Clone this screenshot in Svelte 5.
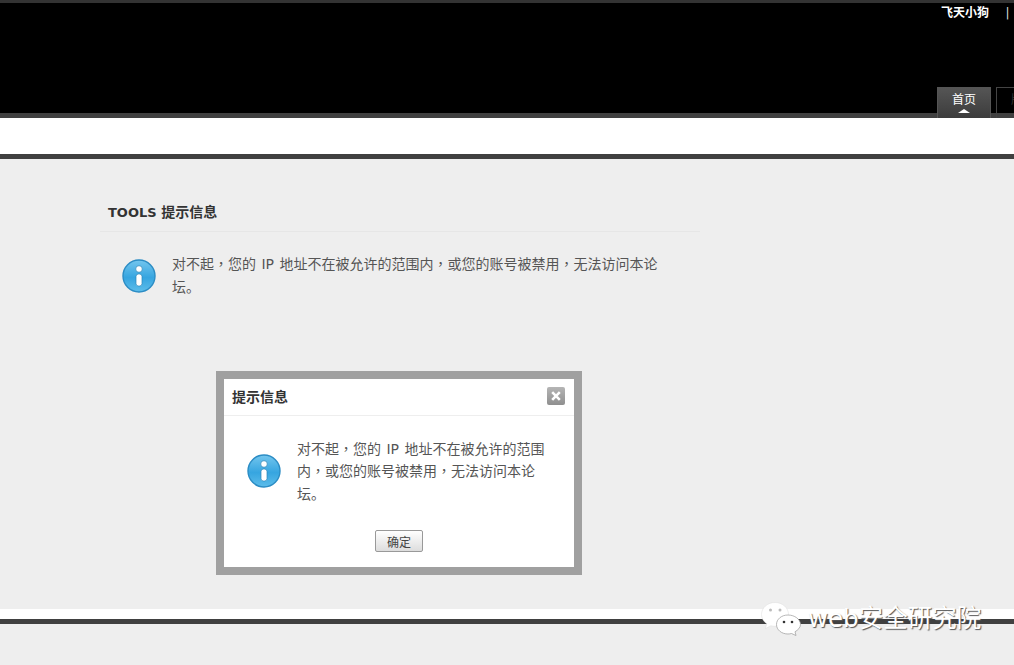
<script>
	const message = "对不起，您的 IP 地址不在被允许的范围内，或您的账号被禁用，无法访问本论坛"
</script>

{#snippet infoIcon()}
	<svg class="info-icon" viewBox="0 0 34 34">
		<defs>
			<linearGradient id="info-fill" x1="0" y1="0" x2="0" y2="1">
				<stop offset="0" stop-color="#74c6ee" />
				<stop offset="0.55" stop-color="#36a5e0" />
				<stop offset="1" stop-color="#5dbdea" />
			</linearGradient>
		</defs>
		<circle cx="17" cy="17" r="16" fill="url(#info-fill)" stroke="#2b8cc4" stroke-width="1.4" />
		<circle cx="17" cy="10" r="3.3" fill="#fff" stroke="#2a84b8" stroke-width="0.7" />
		<rect x="14" y="15" width="6" height="12" rx="2.6" fill="#fff" stroke="#2a84b8" stroke-width="0.7" />
	</svg>
{/snippet}

<div class="page">
	<header class="top">
		<div class="user">
			<span class="name">飞天小狗</span>
			<span class="sep">|</span>
		</div>
		<nav class="tabs">
			<a class="tab active" href="#home">首页</a>
			<a class="tab" href="#forum">版块</a>
		</nav>
	</header>
	<div class="white-band"></div>

	<main class="content">
		<section class="notice">
			<h1>TOOLS <span>提示信息</span></h1>
			<div class="notice-body">
				{@render infoIcon()}
				<p>{message}<span class="stop">。</span></p>
			</div>
		</section>
	</main>

	<footer class="bottom">
		<div class="foot-white"></div>
		<div class="foot-rest"></div>
	</footer>

	<div class="dialog">
		<div class="dialog-head">
			<strong>提示信息</strong>
			<button class="close" aria-label="关闭">
				<svg viewBox="0 0 18 18">
					<path d="M5.2 5.2l7.6 7.6M12.8 5.2l-7.6 7.6" stroke="#fff" stroke-width="2.6" fill="none" />
				</svg>
			</button>
		</div>
		<div class="dialog-body">
			{@render infoIcon()}
			<p>{message}<span class="stop">。</span></p>
		</div>
		<div class="dialog-foot">
			<button class="ok">确定</button>
		</div>
	</div>

	<div class="watermark">
		<svg class="wechat" viewBox="0 0 40 34">
			<path d="M14 .5C6.500.5.500 5.800.500 12.500c0 3.800 2.100 7 5.200 9.200L4.500 26.500l5.400-2.800c1.500.4 2.600.6 4.100.6 7.500 0 13.500-5.500 13.500-11.800C27.500 5.800 21.500.5 14 .5z" fill="#fff" stroke="#ddd" stroke-width="0.5" />
			<circle cx="9.500" cy="8" r="1.500" fill="#bbb" />
			<circle cx="19" cy="8" r="1.500" fill="#bbb" />
			<path d="M27 13c-6.500 0-11.500 4.200-11.500 9.500S20.500 32 27 32c1.200 0 2.400-.2 3.500-.5l4.500 2-1-3.700c3-1.800 5.500-4.300 5.500-7.300C39.500 17.200 33.500 13 27 13z" fill="#fff" stroke="#999" stroke-width="0.7" />
			<circle cx="23" cy="20" r="1.300" fill="#333" />
			<circle cx="31" cy="20" r="1.300" fill="#333" />
		</svg>
		<span>web安全研究院</span>
	</div>
</div>

<style>
	:global(body) {
		margin: 0;
		overflow: hidden;
	}

	.page {
		position: relative;
		width: 1014px;
		height: 665px;
		overflow: hidden;
		background: #eee;
		font-family: "DejaVu Sans", "Noto Sans CJK SC", sans-serif;
		color: #444;
	}

	.top {
		box-sizing: border-box;
		height: 118px;
		background: #000;
		border-top: 3px solid #333;
		border-bottom: 5px solid #404040;
		display: flex;
		flex-direction: column;
		justify-content: space-between;
	}

	.user {
		display: flex;
		gap: 16px;
		padding: 2px 0 0 941px;
		color: #fff;
		font-size: 12px;
		line-height: 16px;
		white-space: nowrap;
	}

	.name {
		font-weight: bold;
	}

	.sep {
		color: #ddd;
		margin-left: 0.4px;
	}

	.tabs {
		display: flex;
		gap: 5px;
		padding-left: 937px;
		margin-bottom: -5px;
	}

	.tab {
		flex: none;
		position: relative;
		box-sizing: border-box;
		width: 54px;
		height: 31px;
		padding-top: 4px;
		border: 1px solid #444;
		border-bottom: 0;
		font-size: 12px;
		line-height: 17px;
		text-align: center;
		text-decoration: none;
		color: #333;
	}

	.tab.active {
		background: linear-gradient(#555, #3c3c3c);
		border-color: #555;
		color: #fff;
	}

	.tab.active::after {
		content: "";
		position: absolute;
		left: 20px;
		bottom: 5px;
		border: 6px solid transparent;
		border-top: 0;
		border-bottom: 4px solid #fff;
	}

	.white-band {
		height: 36px;
		background: #fff;
		border-bottom: 5px solid #404040;
	}

	.content {
		height: 450px;
		box-sizing: border-box;
		padding: 44px 0 0 100px;
	}

	.notice {
		width: 600px;
	}

	h1 {
		box-sizing: border-box;
		height: 29px;
		margin: 0;
		padding: 0 8px;
		border-bottom: 1px solid #e6e6e6;
		font-size: 13px;
		line-height: 18px;
		font-weight: bold;
		color: #333;
	}

	h1 span {
		font-size: 14px;
	}

	.notice-body {
		display: flex;
		align-items: center;
		gap: 16px;
		padding: 21px 40px 0 22px;
	}

	p {
		margin: 0;
		font-family: "DejaVu Sans", "Noto Sans CJK TC", sans-serif;
		font-size: 14px;
		line-height: 22px;
		word-spacing: 1px;
		color: #555;
	}

	.stop {
		font-family: "Noto Sans CJK SC", sans-serif;
	}

	.info-icon {
		flex: none;
		width: 34px;
		height: 34px;
	}

	.bottom {
		height: 56px;
	}

	.foot-white {
		height: 10px;
		background: #fff;
		border-bottom: 5px solid #404040;
	}

	.dialog {
		position: absolute;
		left: 216px;
		top: 371px;
		box-sizing: border-box;
		width: 366px;
		height: 204px;
		border: 8px solid #a0a0a0;
		background: #fff;
		display: flex;
		flex-direction: column;
	}

	.dialog-head {
		box-sizing: border-box;
		height: 37px;
		flex: none;
		display: flex;
		align-items: center;
		justify-content: space-between;
		padding: 0 9px 2px 8px;
		border-bottom: 1px solid #eee;
		font-size: 14px;
		color: #333;
	}

	.close {
		width: 18px;
		height: 18px;
		padding: 0;
		border: 0;
		border-radius: 2px;
		background: linear-gradient(#b5b5b5, #8f8f8f);
	}

	.close svg {
		display: block;
		width: 18px;
		height: 18px;
	}

	.dialog-body {
		flex: 1;
		display: flex;
		align-items: center;
		gap: 16px;
		padding: 0 26px 4px 23px;
	}

	.dialog-foot {
		flex: none;
		height: 37px;
		text-align: center;
	}

	.ok {
		width: 48px;
		height: 22px;
		padding: 0;
		border: 1px solid #999;
		border-radius: 2px;
		background: linear-gradient(#fff, #ddd);
		font-family: inherit;
		font-size: 12px;
		color: #444;
	}

	.watermark {
		position: absolute;
		left: 761px;
		top: 602px;
		display: flex;
		align-items: center;
		gap: 7px;
		font-size: 24.5px;
		line-height: 34px;
		color: #fff;
		white-space: nowrap;
		text-shadow: 1px 1px 1px #555;
	}

	.wechat {
		width: 40px;
		height: 34px;
	}
</style>
